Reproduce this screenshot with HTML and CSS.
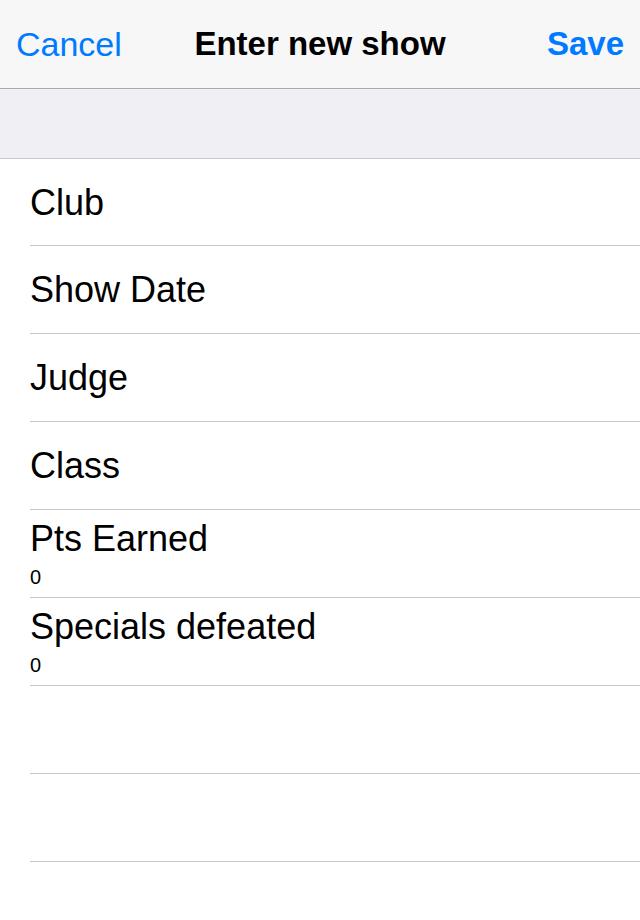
FILE: index.html
```html
<!DOCTYPE html>
<html>
<head>
  <title>Enter new show</title>
  <link rel="stylesheet" href="styles.css">
</head>
<body>

  <div class="navbar">
    <a href="#" class="nav-btn nav-left">Cancel</a>
    <div class="nav-title">Enter new show</div>
    <a href="#" class="nav-btn nav-right">Save</a>
  </div>

  <div class="section-gap"></div>

  <div class="list">
    <div class="row"><div class="row-title">Club</div></div>
    <div class="row"><div class="row-title">Show Date</div></div>
    <div class="row"><div class="row-title">Judge</div></div>
    <div class="row"><div class="row-title">Class</div></div>
    <div class="row row-sub">
      <div class="row-title">Pts Earned</div>
      <div class="row-value">0</div>
    </div>
    <div class="row row-sub">
      <div class="row-title">Specials defeated</div>
      <div class="row-value">0</div>
    </div>
    <div class="row"></div>
    <div class="row"></div>
    <div class="row"></div>
  </div>

</body>
</html>
```

FILE: styles.css
```css
body { margin: 0; background: #fff; font-family: "Liberation Sans", Arial, sans-serif; color: #000; overflow: hidden; }
a { text-decoration: none; }

.navbar { display: grid; grid-template-columns: 1fr auto 1fr; align-items: center; height: 88px; background: #f7f7f7; border-bottom: 1px solid #a9a9ad; padding: 0 16px; }
.nav-btn { color: #007aff; font-size: 34px; line-height: 40px; }
.nav-left { justify-self: start; }
.nav-right { justify-self: end; font-weight: bold; font-size: 33px; }
.nav-title { font-size: 33px; font-weight: bold; line-height: 40px; }

.section-gap { height: 69px; background: #efeff4; border-bottom: 1px solid #c8c7cc; }

.row { height: 86px; padding-top: 1px; margin-left: 30px; border-bottom: 1px solid #c8c7cc; display: flex; flex-direction: column; justify-content: center; }
.row:first-child { height: 85px; }
.row-title { font-size: 36px; line-height: 36px; }
.row-value { font-size: 20px; line-height: 20px; margin-top: 10px; }
```
